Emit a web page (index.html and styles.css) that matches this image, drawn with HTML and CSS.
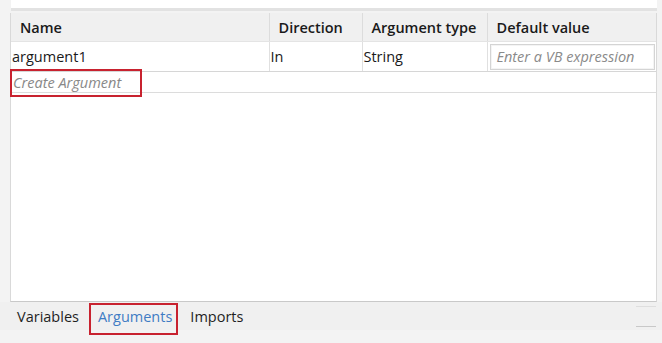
FILE: index.html
```html
<!DOCTYPE html>
<html lang="en">
<head>
    <meta charset="UTF-8">
    <title>Arguments</title>
    <link rel="stylesheet" href="styles.css">
</head>
<body>
    <div class="designer">
        <div class="top-strip"></div>

        <div class="grid-panel">
            <table class="args-table">
                <colgroup>
                    <col class="col-name">
                    <col class="col-dir">
                    <col class="col-type">
                    <col class="col-default">
                </colgroup>
                <thead>
                    <tr>
                        <th>Name</th>
                        <th>Direction</th>
                        <th>Argument type</th>
                        <th>Default value</th>
                    </tr>
                </thead>
                <tbody>
                    <tr class="arg-row">
                        <td>argument1</td>
                        <td>In</td>
                        <td>String</td>
                        <td class="cell-input"><div class="expr-box">Enter a VB expression</div></td>
                    </tr>
                    <tr class="create-row">
                        <td colspan="4">Create Argument</td>
                    </tr>
                </tbody>
            </table>
            <div class="mark mark-create"></div>
        </div>

        <div class="tab-bar">
            <span class="tab">Variables</span>
            <span class="tab active">Arguments</span>
            <span class="tab">Imports</span>
            <div class="mark mark-tab"></div>
            <div class="scroll-bit scroll-bit-top"></div>
            <div class="scroll-bit scroll-bit-bottom"></div>
        </div>
    </div>
</body>
</html>
```

FILE: styles.css
```css
body {
    margin: 0;
    background-color: #f0f0f0;
    font-family: "Open Sans", "Noto Sans", sans-serif;
    font-size: 14.5px;
    color: #1a1a1a;
}

.designer {
    width: 662px;
    height: 343px;
    background-color: #f3f3f3;
}

.top-strip {
    margin-left: 11px;
    margin-right: 5px;
    height: 8px;
    background-color: #ffffff;
    border-bottom: 3px solid #e2e2e2;
}

.grid-panel {
    position: relative;
    margin-left: 10px;
    margin-right: 5px;
    margin-top: 2px;
    height: 288px;
    background-color: #ffffff;
    border-left: 1px solid #d9d9d9;
    border-right: 1px solid #d9d9d9;
    border-bottom: 1px solid #c9c9c9;
}

.args-table {
    width: 100%;
    border-collapse: collapse;
    table-layout: fixed;
}

.col-name { width: 258px; }
.col-dir { width: 93px; }
.col-type { width: 125px; }

.args-table th {
    height: 28px;
    padding: 0 0 0 9px;
    text-align: left;
    font-weight: 600;
    background-color: #f0f0f0;
    border-right: 1px solid #dcdcdc;
    border-bottom: 1px solid #e4e4e4;
    white-space: nowrap;
    overflow: hidden;
    text-overflow: clip;
}

.args-table th:last-child {
    border-right: none;
}

.arg-row td {
    height: 29px;
    padding: 0 0 0 1px;
    border-right: 1px solid #e0e0e0;
    border-bottom: 1px solid #d6d6d6;
    white-space: nowrap;
}

.arg-row td:last-child {
    border-right: none;
}

.cell-input {
    padding: 0 1px 0 2px !important;
}

.expr-box {
    height: 24px;
    line-height: 24px;
    padding-left: 6px;
    border: 1px solid #d4d4d4;
    box-shadow: inset 0 0 0 1px #f4f4f4;
    font-style: italic;
    color: #8a8a8a;
}

.create-row td {
    height: 20px;
    padding: 0 0 0 2px;
    font-style: italic;
    color: #888888;
    border-bottom: 1px solid #dcdcdc;
}

.tab-bar {
    position: relative;
    display: flex;
    height: 28px;
    padding-left: 10px;
    background-color: #f0f0f0;
}

.tab {
    padding: 0 7px;
    line-height: 30px;
    color: #1f1f1f;
}

.tab.active {
    color: #3f7cc4;
    padding: 0 11px 0 12px;
}

.mark {
    position: absolute;
    border: 2px solid #c8222f;
}

.mark-create {
    left: -1px;
    top: 56px;
    width: 128px;
    height: 24px;
}

.mark-tab {
    left: 89px;
    top: 1px;
    width: 85px;
    height: 28px;
}

.scroll-bit {
    position: absolute;
    left: 636px;
    width: 20px;
    height: 1px;
    background-color: #dedede;
}

.scroll-bit-top { top: 4px; }
.scroll-bit-bottom { top: 24px; background-color: #c8c8c8; }
```
